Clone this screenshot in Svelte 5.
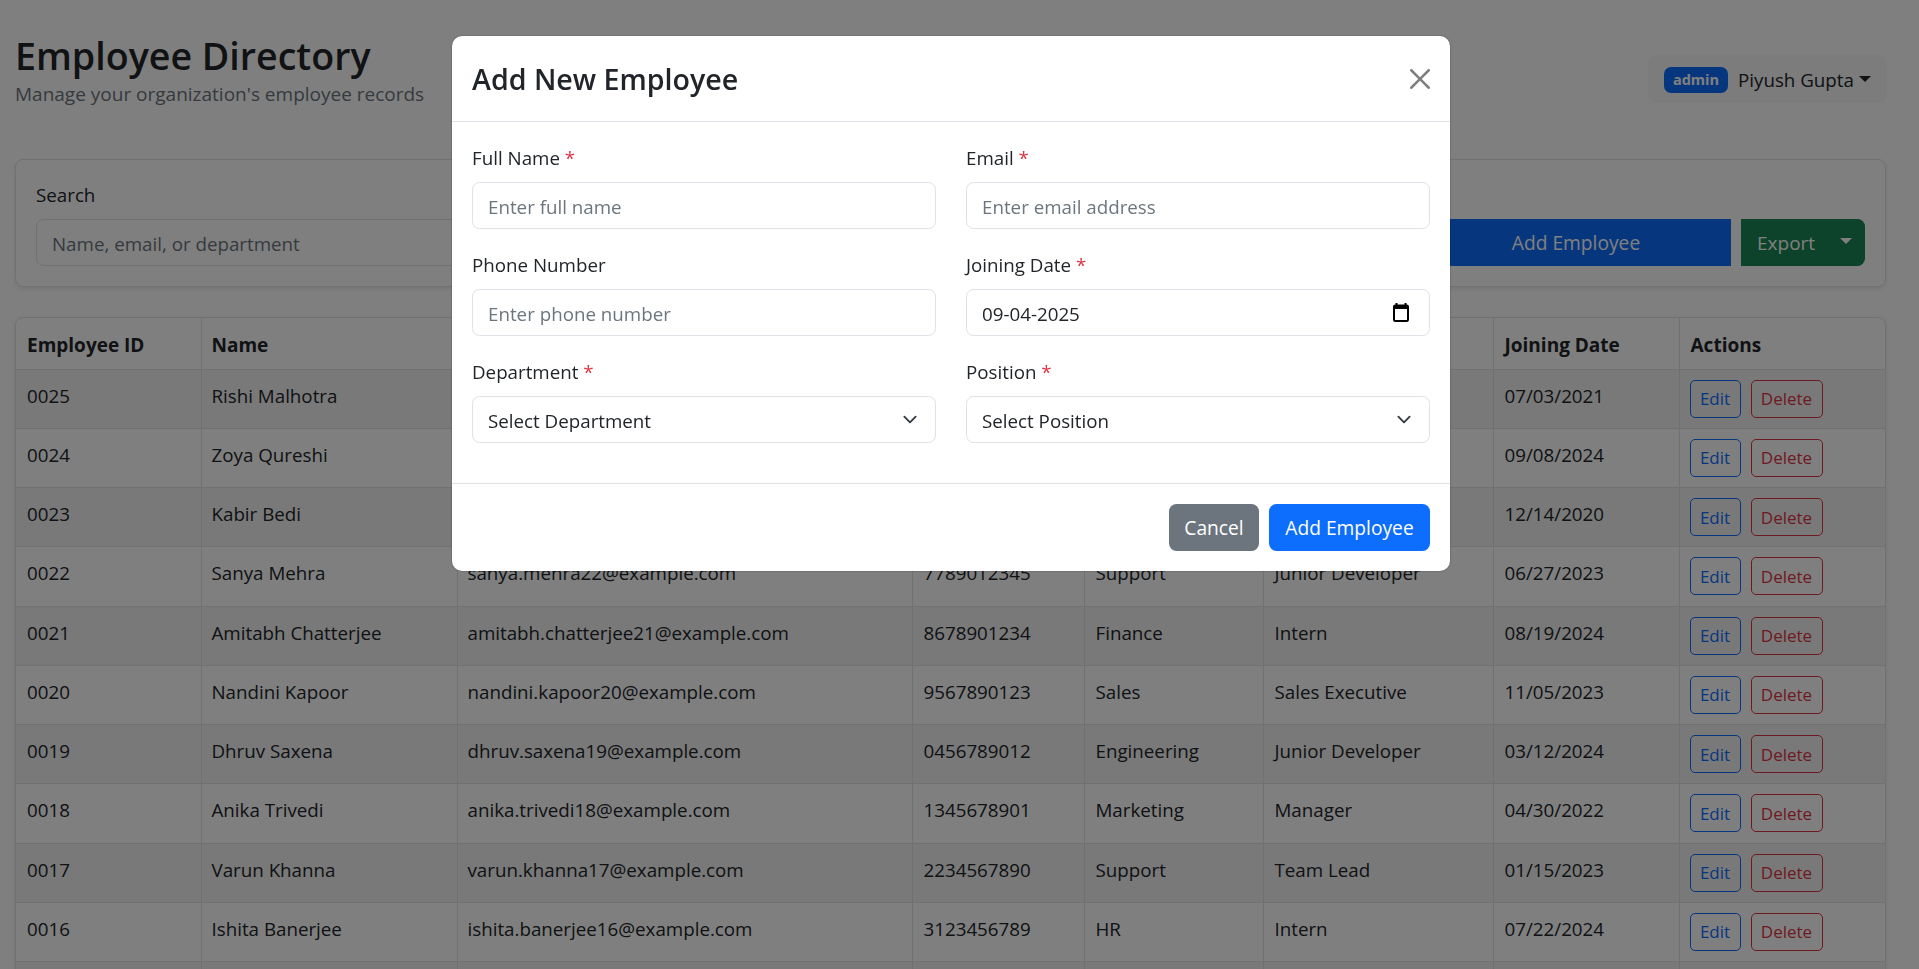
<script>
	const employees = [
		{ id: '0025', name: 'Rishi Malhotra', email: 'rishi.malhotra25@example.com', phone: '9876543210', dept: 'Engineering', position: 'Senior Developer', date: '07/03/2021' },
		{ id: '0024', name: 'Zoya Qureshi', email: 'zoya.qureshi24@example.com', phone: '8765432109', dept: 'Marketing', position: 'Intern', date: '09/08/2024' },
		{ id: '0023', name: 'Kabir Bedi', email: 'kabir.bedi23@example.com', phone: '7654321098', dept: 'Sales', position: 'Manager', date: '12/14/2020' },
		{ id: '0022', name: 'Sanya Mehra', email: 'sanya.mehra22@example.com', phone: '7789012345', dept: 'Support', position: 'Junior Developer', date: '06/27/2023' },
		{ id: '0021', name: 'Amitabh Chatterjee', email: 'amitabh.chatterjee21@example.com', phone: '8678901234', dept: 'Finance', position: 'Intern', date: '08/19/2024' },
		{ id: '0020', name: 'Nandini Kapoor', email: 'nandini.kapoor20@example.com', phone: '9567890123', dept: 'Sales', position: 'Sales Executive', date: '11/05/2023' },
		{ id: '0019', name: 'Dhruv Saxena', email: 'dhruv.saxena19@example.com', phone: '0456789012', dept: 'Engineering', position: 'Junior Developer', date: '03/12/2024' },
		{ id: '0018', name: 'Anika Trivedi', email: 'anika.trivedi18@example.com', phone: '1345678901', dept: 'Marketing', position: 'Manager', date: '04/30/2022' },
		{ id: '0017', name: 'Varun Khanna', email: 'varun.khanna17@example.com', phone: '2234567890', dept: 'Support', position: 'Team Lead', date: '01/15/2023' },
		{ id: '0016', name: 'Ishita Banerjee', email: 'ishita.banerjee16@example.com', phone: '3123456789', dept: 'HR', position: 'Intern', date: '07/22/2024' },
		{ id: '0015', name: 'Rohan Desai', email: 'rohan.desai15@example.com', phone: '4012345678', dept: 'Finance', position: 'Analyst', date: '02/18/2023' }
	];
</script>

<div class="page">
	<header class="top">
		<div>
			<h1>Employee Directory</h1>
			<p class="sub">Manage your organization's employee records</p>
		</div>
		<div class="user">
			<span class="badge">admin</span>
			<span class="user-name">Piyush Gupta</span>
			<span class="caret"></span>
		</div>
	</header>

	<section class="filters">
		<div class="search">
			<label for="search">Search</label>
			<input id="search" class="control" placeholder="Name, email, or department" />
		</div>
		<button class="add-main">Add Employee</button>
		<div class="export">
			<span>Export</span>
			<span class="caret"></span>
		</div>
	</section>

	<div class="table-wrap">
		<table>
			<colgroup>
				<col style="width: 185px" />
				<col style="width: 256px" />
				<col style="width: 455px" />
				<col style="width: 172px" />
				<col style="width: 179px" />
				<col style="width: 230px" />
				<col style="width: 186px" />
				<col />
			</colgroup>
			<thead>
				<tr>
					<th>Employee ID</th>
					<th>Name</th>
					<th>Email</th>
					<th>Phone</th>
					<th>Department</th>
					<th>Position</th>
					<th>Joining Date</th>
					<th>Actions</th>
				</tr>
			</thead>
			<tbody>
				{#each employees as emp (emp.id)}
					<tr>
						<td>{emp.id}</td>
						<td>{emp.name}</td>
						<td>{emp.email}</td>
						<td>{emp.phone}</td>
						<td>{emp.dept}</td>
						<td>{emp.position}</td>
						<td>{emp.date}</td>
						<td>
							<div class="actions">
								<button class="btn-edit">Edit</button>
								<button class="btn-delete">Delete</button>
							</div>
						</td>
					</tr>
				{/each}
			</tbody>
		</table>
	</div>
</div>

<div class="backdrop"></div>

<div class="modal">
	<div class="modal-head">
		<h2>Add New Employee</h2>
		<svg class="close" viewBox="0 0 16 16" width="20" height="20" aria-hidden="true">
			<path d="M.293.293a1 1 0 0 1 1.414 0L8 6.586 14.293.293a1 1 0 1 1 1.414 1.414L9.414 8l6.293 6.293a1 1 0 0 1-1.414 1.414L8 9.414l-6.293 6.293a1 1 0 0 1-1.414-1.414L6.586 8 .293 1.707a1 1 0 0 1 0-1.414z" />
		</svg>
	</div>
	<div class="modal-body">
		<div class="field">
			<label for="f-name">Full Name <span class="req">*</span></label>
			<input id="f-name" class="control" placeholder="Enter full name" />
		</div>
		<div class="field">
			<label for="f-email">Email <span class="req">*</span></label>
			<input id="f-email" class="control" placeholder="Enter email address" />
		</div>
		<div class="field">
			<label for="f-phone">Phone Number</label>
			<input id="f-phone" class="control" placeholder="Enter phone number" />
		</div>
		<div class="field">
			<label for="f-date">Joining Date <span class="req">*</span></label>
			<div class="date-box">
				<input id="f-date" class="control" value="09-04-2025" />
				<svg class="cal" viewBox="0 0 16 19" width="16" height="19" aria-hidden="true">
					<path d="M3.5 0v3M12.5 0v3" stroke="#000" stroke-width="2" fill="none" />
					<rect x="1" y="2.5" width="14" height="15.5" rx="1.2" fill="none" stroke="#000" stroke-width="2" />
					<rect x="1" y="2.5" width="14" height="3.5" fill="#000" />
				</svg>
			</div>
		</div>
		<div class="field">
			<label for="f-dept">Department <span class="req">*</span></label>
			<select id="f-dept" class="control select"><option>Select Department</option></select>
		</div>
		<div class="field">
			<label for="f-pos">Position <span class="req">*</span></label>
			<select id="f-pos" class="control select"><option>Select Position</option></select>
		</div>
	</div>
	<div class="modal-foot">
		<button class="btn-cancel">Cancel</button>
		<button class="btn-primary">Add Employee</button>
	</div>
</div>

<style>
	:global(body) {
		margin: 0;
		overflow: hidden;
		background: #fff;
	}

	.page, .modal {
		font-family: "Open Sans", "Noto Sans", sans-serif;
		font-size: 18.75px;
		color: #212529;
	}

	.page {
		padding: 30px 33px 0 15px;
		height: 969px;
		box-sizing: border-box;
		overflow: hidden;
	}

	.top {
		display: flex;
		justify-content: space-between;
		align-items: flex-start;
		height: 129px;
	}

	h1 {
		margin: 4px 0 0;
		font-size: 37.6px;
		font-weight: 600;
		line-height: 44px;
	}

	.sub {
		margin: 3px 0 0;
		font-size: 19px;
		line-height: 26px;
		color: #6c757d;
	}

	.user {
		display: flex;
		align-items: center;
		height: 48px;
		margin-top: 25px;
		padding: 0 16px;
		background: #f8f9fa;
		border-radius: 8px;
		box-sizing: border-box;
		width: 239px;
		margin-right: -1px;
		white-space: nowrap;
	}

	.badge {
		background: #0d6efd;
		color: #fff;
		font-size: 14.5px;
		font-weight: 700;
		width: 64px;
		flex: none;
		height: 26px;
		line-height: 26px;
		text-align: center;
		border-radius: 7px;
		margin: 2px 10px 0 0;
	}

	.caret {
		display: inline-block;
		margin-left: 5px;
		border-top: 6px solid;
		border-left: 6px solid transparent;
		border-right: 6px solid transparent;
	}

	.filters {
		display: flex;
		align-items: flex-end;
		height: 128px;
		padding: 0 20px 20px;
		box-sizing: border-box;
		border: 1px solid #dee2e6;
		border-radius: 8px;
		box-shadow: 0 2px 5px rgba(0, 0, 0, 0.08);
	}

	.search {
		flex: 1;
		margin-right: 20px;
	}

	.search label {
		display: block;
		line-height: 30px;
		margin-bottom: 9px;
	}

	.control {
		display: block;
		width: 100%;
		height: 47px;
		box-sizing: border-box;
		padding: 1px 15px 0;
		border: 1px solid #dee2e6;
		border-radius: 7.5px;
		background: #fff;
		font: inherit;
		color: #212529;
		outline: none;
	}

	.control::placeholder {
		color: #6c757d;
		opacity: 1;
	}

	.add-main {
		width: 310px;
		height: 47px;
		border: none;
		background: #0d6efd;
		color: #fff;
		font: inherit;
		font-size: 19.2px;
		border-radius: 7.5px 0 0 7.5px;
		margin-right: 10px;
	}

	.export {
		width: 124px;
		height: 47px;
		background: #198754;
		color: #fff;
		font-size: 19px;
		border-radius: 0 7.5px 7.5px 0;
		box-sizing: border-box;
		padding: 0 13px 0 16px;
		display: flex;
		align-items: center;
		justify-content: space-between;
	}

	.export .caret {
		margin-top: -4px;
	}

	.table-wrap {
		margin-top: 30px;
		border: 1px solid #dee2e6;
		border-radius: 8px 8px 0 0;
		box-shadow: 0 2px 5px rgba(0, 0, 0, 0.1);
		overflow: hidden;
	}

	table {
		width: 100%;
		table-layout: fixed;
		border-collapse: collapse;
	}

	th, td {
		text-align: left;
		vertical-align: top;
		padding: 10px;
		line-height: 32px;
		border-left: 1px solid #dee2e6;
		border-bottom: 1px solid #dee2e6;
		white-space: nowrap;
	}

	th:first-child, td:first-child {
		border-left: none;
		padding-left: 11px;
	}

	th:nth-child(n+4), td:nth-child(n+4) {
		padding-left: 11px;
	}

	th {
		font-weight: 700;
		font-size: 19px;
		padding-top: 11px;
		padding-bottom: 7px;
		height: 51px;
		box-sizing: border-box;
	}

	td {
		height: 59.25px;
		box-sizing: border-box;
	}

	tbody tr:nth-child(odd) td {
		background: #f2f2f2;
	}

	.actions {
		display: flex;
		gap: 10px;
		margin-left: -1px;
	}

	.actions button {
		height: 38px;
		padding: 0;
		background: transparent;
		border: 1px solid;
		border-radius: 5px;
		font: inherit;
		font-size: 17px;
		line-height: 1;
	}

	.btn-edit {
		color: #0d6efd;
		width: 51px;
	}

	.btn-delete {
		color: #dc3545;
		width: 72px;
	}

	.backdrop {
		position: fixed;
		inset: 0;
		background: rgba(0, 0, 0, 0.5);
	}

	.modal {
		position: fixed;
		top: 36px;
		left: 452px;
		width: 998px;
		background: #fff;
		border-radius: 10px;
		box-shadow: 0 0 2px rgba(0, 0, 0, 0.4);
	}

	.modal-head {
		display: flex;
		align-items: center;
		justify-content: space-between;
		height: 85px;
		padding: 0 20px;
		border-bottom: 1px solid #dee2e6;
	}

	h2 {
		margin: 0;
		font-size: 28.6px;
		font-weight: 600;
	}

	.close {
		fill: #7f7f7f;
		margin-top: 1px;
	}

	.modal-body {
		display: grid;
		grid-template-columns: 1fr 1fr;
		column-gap: 30px;
		row-gap: 21px;
		padding: 21px 20px 39.5px;
	}

	.field label {
		display: block;
		line-height: 30px;
		margin-bottom: 9px;
	}

	.req {
		color: #dc3545;
	}

	.date-box {
		position: relative;
	}

	.cal {
		position: absolute;
		right: 21px;
		top: 14px;
	}

	.select {
		appearance: none;
		background-image: url("data:image/svg+xml,%3csvg xmlns='http://www.w3.org/2000/svg' viewBox='0 0 16 16'%3e%3cpath fill='none' stroke='%23343a40' stroke-linecap='round' stroke-linejoin='round' stroke-width='2' d='m2 5 6 6 6-6'/%3e%3c/svg%3e");
		background-repeat: no-repeat;
		background-position: right 15px center;
		background-size: 20px 15px;
	}

	.modal-foot {
		display: flex;
		justify-content: flex-end;
		gap: 10px;
		height: 88px;
		padding: 20px;
		box-sizing: border-box;
		border-top: 1px solid #dee2e6;
	}

	.modal-foot button {
		height: 47px;
		border: none;
		border-radius: 7.5px;
		color: #fff;
		font: inherit;
		font-size: 19.2px;
	}

	.btn-cancel {
		background: #6c757d;
		width: 90px;
	}

	.btn-primary {
		background: #0d6efd;
		width: 161px;
	}
</style>
